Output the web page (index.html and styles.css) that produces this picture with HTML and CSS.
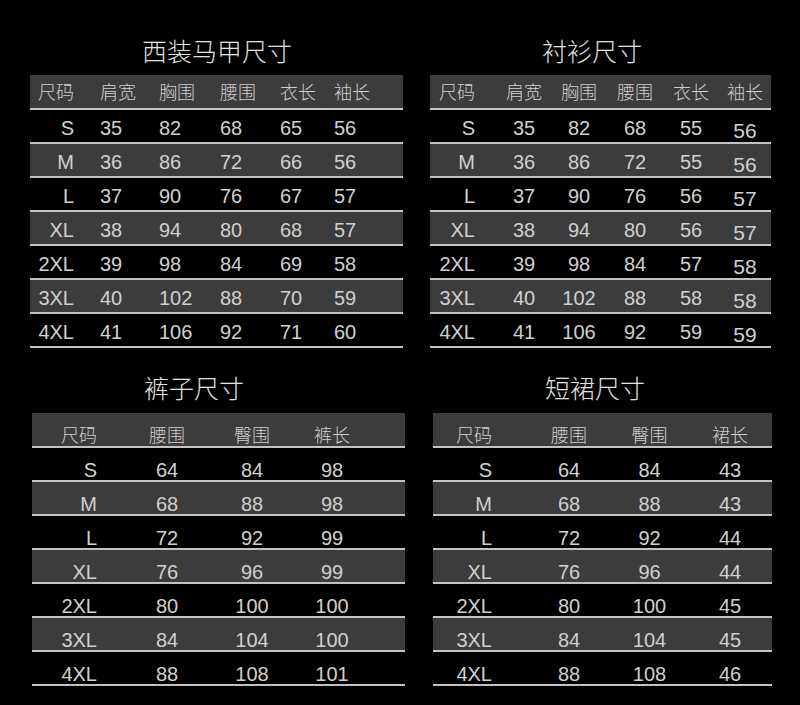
FILE: index.html
```html
<!DOCTYPE html>
<html lang="zh-CN">
<head>
<meta charset="utf-8">
<title>尺码表</title>
<link rel="stylesheet" href="styles.css">
</head>
<body>
<main class="sheet">
  <section class="panel panel-tl">
    <h2 class="title">西装马甲尺寸</h2>
    <div class="tbl tbl-vest">
      <div class="row head"><span class="c sz">尺码</span><span class="c">肩宽</span><span class="c">胸围</span><span class="c">腰围</span><span class="c">衣长</span><span class="c">袖长</span></div>
      <div class="row"><span class="c sz">S</span><span class="c">35</span><span class="c">82</span><span class="c">68</span><span class="c">65</span><span class="c">56</span></div>
      <div class="row alt"><span class="c sz">M</span><span class="c">36</span><span class="c">86</span><span class="c">72</span><span class="c">66</span><span class="c">56</span></div>
      <div class="row"><span class="c sz">L</span><span class="c">37</span><span class="c">90</span><span class="c">76</span><span class="c">67</span><span class="c">57</span></div>
      <div class="row alt"><span class="c sz">XL</span><span class="c">38</span><span class="c">94</span><span class="c">80</span><span class="c">68</span><span class="c">57</span></div>
      <div class="row"><span class="c sz">2XL</span><span class="c">39</span><span class="c">98</span><span class="c">84</span><span class="c">69</span><span class="c">58</span></div>
      <div class="row alt"><span class="c sz">3XL</span><span class="c">40</span><span class="c">102</span><span class="c">88</span><span class="c">70</span><span class="c">59</span></div>
      <div class="row"><span class="c sz">4XL</span><span class="c">41</span><span class="c">106</span><span class="c">92</span><span class="c">71</span><span class="c">60</span></div>
    </div>
  </section>

  <section class="panel panel-tr">
    <h2 class="title">衬衫尺寸</h2>
    <div class="tbl tbl-shirt">
      <div class="row head"><span class="c sz">尺码</span><span class="c">肩宽</span><span class="c">胸围</span><span class="c">腰围</span><span class="c">衣长</span><span class="c">袖长</span></div>
      <div class="row"><span class="c sz">S</span><span class="c">35</span><span class="c">82</span><span class="c">68</span><span class="c">55</span><span class="c low">56</span></div>
      <div class="row alt"><span class="c sz">M</span><span class="c">36</span><span class="c">86</span><span class="c">72</span><span class="c">55</span><span class="c low">56</span></div>
      <div class="row"><span class="c sz">L</span><span class="c">37</span><span class="c">90</span><span class="c">76</span><span class="c">56</span><span class="c low">57</span></div>
      <div class="row alt"><span class="c sz">XL</span><span class="c">38</span><span class="c">94</span><span class="c">80</span><span class="c">56</span><span class="c low">57</span></div>
      <div class="row"><span class="c sz">2XL</span><span class="c">39</span><span class="c">98</span><span class="c">84</span><span class="c">57</span><span class="c low">58</span></div>
      <div class="row alt"><span class="c sz">3XL</span><span class="c">40</span><span class="c">102</span><span class="c">88</span><span class="c">58</span><span class="c low">58</span></div>
      <div class="row"><span class="c sz">4XL</span><span class="c">41</span><span class="c">106</span><span class="c">92</span><span class="c">59</span><span class="c low">59</span></div>
    </div>
  </section>

  <section class="panel panel-bl">
    <h2 class="title">裤子尺寸</h2>
    <div class="tbl tbl-low tbl-pants">
      <div class="row head"><span class="c sz">尺码</span><span class="c">腰围</span><span class="c">臀围</span><span class="c">裤长</span></div>
      <div class="row"><span class="c sz">S</span><span class="c">64</span><span class="c">84</span><span class="c">98</span></div>
      <div class="row alt"><span class="c sz">M</span><span class="c">68</span><span class="c">88</span><span class="c">98</span></div>
      <div class="row"><span class="c sz">L</span><span class="c">72</span><span class="c">92</span><span class="c">99</span></div>
      <div class="row alt"><span class="c sz">XL</span><span class="c">76</span><span class="c">96</span><span class="c">99</span></div>
      <div class="row"><span class="c sz">2XL</span><span class="c">80</span><span class="c">100</span><span class="c">100</span></div>
      <div class="row alt"><span class="c sz">3XL</span><span class="c">84</span><span class="c">104</span><span class="c">100</span></div>
      <div class="row"><span class="c sz">4XL</span><span class="c">88</span><span class="c">108</span><span class="c">101</span></div>
    </div>
  </section>

  <section class="panel panel-br">
    <h2 class="title">短裙尺寸</h2>
    <div class="tbl tbl-low tbl-skirt">
      <div class="row head"><span class="c sz">尺码</span><span class="c">腰围</span><span class="c">臀围</span><span class="c">裙长</span></div>
      <div class="row"><span class="c sz">S</span><span class="c">64</span><span class="c">84</span><span class="c">43</span></div>
      <div class="row alt"><span class="c sz">M</span><span class="c">68</span><span class="c">88</span><span class="c">43</span></div>
      <div class="row"><span class="c sz">L</span><span class="c">72</span><span class="c">92</span><span class="c">44</span></div>
      <div class="row alt"><span class="c sz">XL</span><span class="c">76</span><span class="c">96</span><span class="c">44</span></div>
      <div class="row"><span class="c sz">2XL</span><span class="c">80</span><span class="c">100</span><span class="c">45</span></div>
      <div class="row alt"><span class="c sz">3XL</span><span class="c">84</span><span class="c">104</span><span class="c">45</span></div>
      <div class="row"><span class="c sz">4XL</span><span class="c">88</span><span class="c">108</span><span class="c">46</span></div>
    </div>
  </section>
</main>
</body>
</html>
```

FILE: styles.css
```css
html, body {
  margin: 0;
  padding: 0;
  background: #000;
}

body {
  width: 800px;
  height: 705px;
  overflow: hidden;
  color: #d0d0d0;
  font-family: "Liberation Sans", Arial, "Noto Sans CJK SC", sans-serif;
}

.sheet {
  display: grid;
  grid-template-columns: 400px 400px;
}

.panel-tl { margin-left: 30px; width: 373px; }
.panel-tr { margin-left: 30px; width: 341px; }
.panel-bl { margin-left: 32px; width: 373px; }
.panel-br { margin-left: 33px; width: 339px; }

.title {
  margin: 0;
  padding-left: 112px;
  font-family: "Noto Sans CJK SC", sans-serif;
  font-size: 25px;
  font-weight: 300;
  line-height: 30px;
  color: #e2e2e2;
  white-space: nowrap;
}

.panel-tl .title,
.panel-tr .title {
  padding-top: 35px;
  padding-bottom: 10px;
}

.panel-bl .title,
.panel-br .title {
  padding-top: 24px;
  padding-bottom: 11px;
}

.row {
  display: grid;
  height: 32px;
  border-bottom: 2px solid #c2c2c2;
}

.row.alt,
.row.head {
  background: #3c3c3c;
}

.row.head {
  height: 33px;
}

.c {
  display: block;
  font-size: 20px;
  padding-top: 5px;
  line-height: 27px;
  white-space: nowrap;
}

.head .c {
  font-family: "Noto Sans CJK SC", sans-serif;
  font-size: 18px;
  font-weight: 300;
  line-height: 33px;
  padding-top: 0;
  color: #cfcfcf;
}

.sz {
  text-align: right;
}

/* 西装马甲 */
.tbl-vest .row {
  grid-template-columns: 70px 59px 61px 60px 54px 1fr;
}
.tbl-vest .c { text-align: left; }
.tbl-vest .c.sz { text-align: right; padding-right: 26px; }

/* 衬衫 */
.tbl-shirt .row {
  grid-template-columns: 67px 54px 56px 56px 56px 52px;
}
.tbl-shirt .c { text-align: center; }
.tbl-shirt .c.sz { text-align: right; padding-right: 22px; }
.tbl-shirt .c.low {
  padding-top: 10px;
  line-height: 22px;
  font-size: 21px;
}

/* 下装表格：文字偏下 */
.tbl-low .c {
  padding-top: 12px;
  line-height: 20px;
  text-align: center;
}
.tbl-low .head .c {
  padding-top: 9px;
  line-height: 24px;
}

.tbl-pants .row {
  grid-template-columns: 93px 84px 86px 74px 1fr;
}
.tbl-pants .c.sz { text-align: right; padding-right: 28px; }

.tbl-skirt .row {
  grid-template-columns: 96px 80px 81px 80px 1fr;
}
.tbl-skirt .c.sz { text-align: right; padding-right: 37px; }
```
